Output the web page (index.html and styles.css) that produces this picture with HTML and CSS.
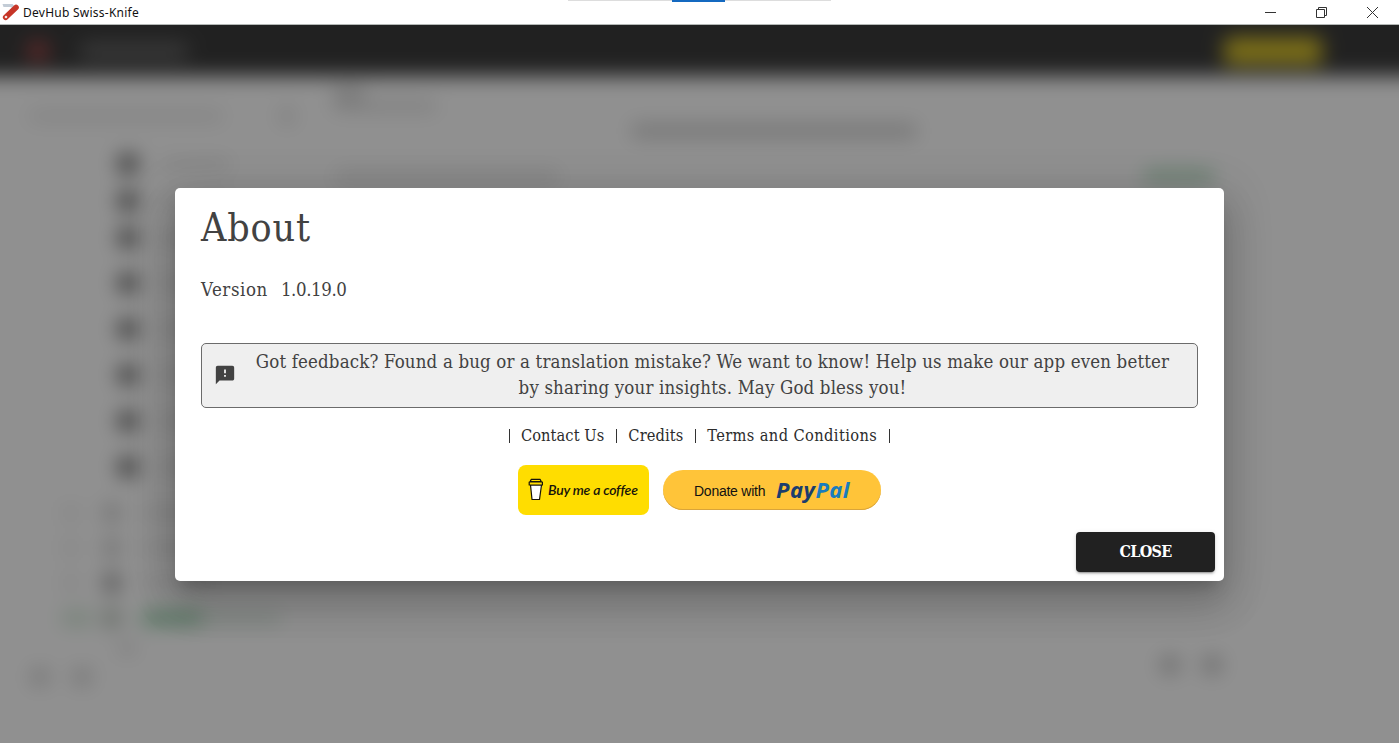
FILE: index.html
```html
<!doctype html>
<html lang="en">
<head>
 <meta charset="UTF-8">
 <meta name="viewport" content="width=device-width, initial-scale=1.0">
 <title>DevHub Swiss-Knife</title>
 <link rel="stylesheet" href="styles.css">
</head>
<body>
<div class="window">
 <div class="titlebar">
  <svg class="app-icon" width="18" height="18" viewBox="0 0 18 18">
   <path d="M.5 1h10l3 3-2 1.500-3-1.500H1.500z" fill="#c3ccd6"/>
   <path d="M3.700 14.300L14 4.500" stroke="#c63527" stroke-width="5.600" stroke-linecap="round"/>
   <circle cx="4" cy="14" r="1.300" fill="#f3e4e2"/>
  </svg>
  <span class="window-name">DevHub Swiss-Knife</span>
  <div class="window-buttons">
   <svg width="13" height="13" viewBox="0 0 13 13"><path d="M1 6.500h11"/></svg>
   <svg width="13" height="13" viewBox="0 0 13 13"><path d="M1.500 3.500h8v8h-8zM3.500 3.500v-2h8v8h-2"/></svg>
   <svg width="13" height="13" viewBox="0 0 13 13"><path d="M1 1l11 11M12 1L1 12"/></svg>
  </div>
  <div class="loader"><i></i></div>
 </div>

 <div class="app">
  <div class="page">
   <div class="appbar">
    <i class="logo"></i>
    <i class="brand"></i>
    <i class="coffee"></i>
   </div>
   <div class="columns">
    <div class="sidebar">
     <div class="search"><i></i><b></b></div>
     <ul class="menu">
      <li><i></i><b></b></li>
      <li><i></i><b></b></li>
      <li><i></i><b></b></li>
     </ul>
     <ul class="menu tall">
      <li><i></i><b></b></li>
      <li><i></i><b></b></li>
      <li><i></i><b></b></li>
      <li><i></i><b></b></li>
      <li><i></i><b></b></li>
     </ul>
     <ul class="menu sub">
      <li><u></u><i></i><b></b></li>
      <li><u></u><i></i><b></b></li>
      <li><u></u><i class="dark"></i><b></b></li>
      <li class="current"><u></u><i></i><b></b><s></s></li>
     </ul>
     <div class="more"></div>
     <div class="tools"><i></i><i></i></div>
    </div>
    <div class="content">
     <div class="crumb"></div>
     <div class="crumb long"></div>
     <div class="heading"></div>
     <div class="labels"><i></i><b></b></div>
     <div class="actions"><i></i><i></i></div>
    </div>
   </div>
  </div>

  <div class="overlay">
   <div class="dialog">
    <h4>About</h4>
    <p class="version"><span>Version</span><span class="number">1.0.19.0</span></p>
    <div class="alert">
     <svg width="22" height="22" viewBox="0 0 24 24"><path fill="#424242" d="M20 2H4c-1.100 0-1.990.9-1.990 2L2 22l4-4h14c1.100 0 2-.9 2-2V4c0-1.100-.9-2-2-2zm-7 12h-2v-2h2v2zm0-4h-2V6h2v4z"/></svg>
     <p>Got feedback? Found a bug or a translation mistake? We want to know! Help us make our app even better<br>by sharing your insights. May God bless you!</p>
    </div>
    <div class="links">
     <i></i><a>Contact Us</a><i></i><a>Credits</a><i></i><a class="terms">Terms and Conditions</a><i></i>
    </div>
    <div class="donate">
     <a class="bmc">
      <svg width="16" height="23" viewBox="0 0 16 23" stroke="#16130a" stroke-width="1.200" stroke-linejoin="round">
       <path d="M2.500 7L4 21.500h7.500L13.500 7z" fill="#fff"/>
       <path d="M3.200 1.400h9l1 2.200H2.200z" fill="#fd0"/>
       <path d="M1.200 4h13.200v3H1.200z" fill="#fd0"/>
      </svg>
      <span>Buy me a coffee</span>
     </a>
     <a class="paypal"><span class="with">Donate with</span><span class="pp"><b>Pay</b><em>Pal</em></span></a>
    </div>
    <div class="footer"><button>CLOSE</button></div>
   </div>
  </div>
 </div>
</div>
</body>
</html>
```

FILE: styles.css
```css
*{
 box-sizing: border-box;
 margin: 0;
 padding: 0;
}
html,body{
 height: 100%;
 overflow: hidden;
}
body{
 font-family: "DejaVu Serif Condensed", "DejaVu Serif", serif;
 font-stretch: condensed;
 color: #424242;
}
ul{
 list-style: none;
}
svg{
 display: block;
 flex: none;
}
.window{
 height: 100%;
 display: flex;
 flex-direction: column;
}

/* title bar */
.titlebar{
 position: relative;
 flex: none;
 height: 25px;
 display: flex;
 align-items: center;
 padding: 0 20px 0 2px;
 background: #fff;
 border-bottom: 1px solid #b4b8b6;
}
.window-name{
 margin-left: 3px;
 padding-top: 1px;
 font: 12px/24px "Noto Sans", sans-serif;
 letter-spacing: .25px;
 color: #111;
}
.window-buttons{
 margin-left: auto;
 display: flex;
 gap: 38px;
}
.window-buttons path{
 fill: none;
 stroke: #333;
}
.loader{
 position: absolute;
 left: 568px;
 top: 0;
 width: 263px;
 height: 1px;
 background: #ddd;
}
.loader i{
 display: block;
 width: 53px;
 height: 2px;
 margin-left: 104px;
 background: #1469c0;
}

/* page behind the dialog, bleeds 30px past the window so the blur has no pale rim */
.app{
 position: relative;
 flex: 1;
 min-height: 0;
 display: flex;
 flex-direction: column;
 overflow: hidden;
 background: #fff;
}
.page{
 flex: 1;
 min-height: 0;
 display: flex;
 flex-direction: column;
 margin: -30px;
 background: #fff;
 filter: blur(10px);
}
.page i,
.page b{
 border-radius: 6px;
}
.appbar{
 flex: none;
 height: 81px;
 display: flex;
 align-items: center;
 padding: 30px 107px 0 58px;
 background: #212121;
}
.logo{
 width: 20px;
 height: 18px;
 background: #a33;
}
.brand{
 width: 108px;
 height: 16px;
 margin-left: 32px;
 background: #555;
}
.coffee{
 width: 98px;
 height: 28px;
 margin-left: auto;
 background: #d5bb10;
}
.columns{
 flex: 1;
 min-height: 0;
 display: flex;
 padding: 0 30px 30px;
}
.sidebar{
 width: 320px;
 padding-top: 28px;
}
.search{
 display: flex;
 align-items: center;
 height: 24px;
 margin-bottom: 17px;
 padding-left: 28px;
}
.search i{
 width: 196px;
 height: 12px;
 margin-right: 56px;
 background: #e6e6e6;
}
.search b{
 width: 14px;
 height: 18px;
 background: #dadada;
}
.menu li{
 display: flex;
 align-items: center;
 height: 37px;
 padding-left: 118px;
}
.menu i{
 width: 20px;
 height: 20px;
 margin-right: 21px;
 background: #606060;
}
.menu b{
 width: 72px;
 height: 10px;
 background: #e4e4e4;
}
.menu.tall{
 margin-top: 4px;
}
.menu.tall li{
 height: 46px;
}
.menu.sub{
 margin-top: 5px;
}
.menu.sub li{
 height: 35px;
 padding-left: 62px;
}
.menu.sub u{
 width: 18px;
 height: 16px;
 margin-right: 24px;
 background: #ececec;
}
.menu.sub i{
 width: 16px;
 background: #c4c4c4;
}
.menu.sub .dark{
 background: #8c8c8c;
}
.menu.sub .current u{
 width: 30px;
 margin-right: 12px;
 background: #d0e6d4;
}
.menu.sub .current i{
 background: #aab8aa;
}
.menu.sub .current b{
 width: 62px;
 height: 14px;
 background: #86c89c;
}
.menu.sub s{
 width: 78px;
 height: 12px;
 background: #dae9df;
}
.more{
 width: 14px;
 height: 12px;
 margin: 7px 0 0 120px;
 background: #d5d5d5;
}
.tools{
 display: flex;
 gap: 24px;
 margin: 14px 0 0 31px;
}
.tools i,
.actions i{
 width: 18px;
 height: 18px;
 background: #ccc;
}
.content{
 flex: 1;
 display: flex;
 flex-direction: column;
 padding: 12px 178px 69px 14px;
}
.crumb{
 width: 30px;
 height: 12px;
 background: #ccc;
}
.crumb.long{
 width: 102px;
 background: #dfdfdf;
}
.heading{
 width: 284px;
 height: 14px;
 margin: 12px 0 0 298px;
 background: #cbcbcb;
}
.labels{
 display: flex;
 justify-content: space-between;
 margin: 32px 6px 0 0;
}
.labels i{
 width: 226px;
 height: 14px;
 background: #e6e6e6;
}
.labels b{
 width: 72px;
 height: 12px;
 background: #a8dab8;
}
.actions{
 display: flex;
 justify-content: flex-end;
 gap: 24px;
 margin-top: auto;
}
.actions i{
 background: #b8b8b8;
}

/* dialog */
.overlay{
 position: absolute;
 inset: 0;
 display: flex;
 align-items: center;
 justify-content: center;
 background: rgba(33,33,33,.5);
}
.dialog{
 width: 1049px;
 height: 393px;
 display: flex;
 flex-direction: column;
 padding: 17px 26px 0;
 background: #fff;
 border-radius: 5px;
 box-shadow: 0 11px 15px -7px rgba(0,0,0,.2), 0 24px 38px 3px rgba(0,0,0,.14), 0 9px 46px 8px rgba(0,0,0,.12);
}
h4{
 font-size: 39px;
 font-weight: 400;
 line-height: 46px;
 letter-spacing: .9px;
}
.version{
 display: flex;
 gap: 13px;
 margin-top: 26px;
 font-size: 18.5px;
 line-height: 26px;
 letter-spacing: .6px;
}
.version .number{
 letter-spacing: -.4px;
}
.alert{
 flex: none;
 display: flex;
 align-items: center;
 height: 65px;
 margin-top: 40px;
 padding: 0 12px;
 border: 1px solid #6b6b6b;
 border-radius: 5px;
 background: #efefef;
}
.alert p{
 flex: 1;
 margin: 0 3px 0 7px;
 font-size: 18.5px;
 line-height: 26px;
 letter-spacing: .16px;
 text-align: center;
 white-space: nowrap;
}
.links{
 display: flex;
 align-items: center;
 justify-content: center;
 height: 24px;
 margin-top: 16px;
 font-size: 16.3px;
 letter-spacing: .08px;
 color: #2c2c2c;
 white-space: nowrap;
}
.links i{
 width: 1px;
 height: 14px;
 background: #333;
}
.links a{
 margin: 0 12px 0 11px;
}
.links .terms{
 letter-spacing: .38px;
}
.donate{
 display: flex;
 align-items: center;
 justify-content: center;
 gap: 14px;
 margin-top: 17px;
}
.bmc{
 display: flex;
 align-items: center;
 width: 131px;
 height: 50px;
 padding-left: 10px;
 border-radius: 8px;
 background: #fd0;
 color: #16130a;
}
.bmc span{
 margin-left: 4px;
 font: italic 600 14px "Lato", sans-serif;
 letter-spacing: -.2px;
 white-space: nowrap;
}
.paypal{
 display: flex;
 align-items: center;
 width: 218px;
 height: 40px;
 padding-left: 31px;
 border-radius: 20px;
 background: #ffc439;
 box-shadow: inset 0 -1px 0 #d9a43a;
 color: #111;
}
.with{
 width: 82px;
 padding-top: 2px;
 font: 14px "Liberation Sans", sans-serif;
 letter-spacing: -.25px;
 white-space: nowrap;
}
.pp{
 padding-bottom: 2px;
 font: italic 700 22px/30px "Noto Sans", sans-serif;
 letter-spacing: .5px;
}
.pp b{
 font-weight: 700;
 color: #1b3d6d;
}
.pp em{
 color: #1a7cbd;
}
.footer{
 display: flex;
 justify-content: flex-end;
 margin: 17px -17px 0 0;
}
button{
 width: 139px;
 height: 40px;
 border: 0;
 border-radius: 4px;
 background: #212121;
 box-shadow: 0 3px 1px -2px rgba(0,0,0,.2), 0 2px 2px rgba(0,0,0,.14), 0 1px 5px rgba(0,0,0,.12);
 color: #fff;
 font: 600 16px "DejaVu Serif Condensed", "DejaVu Serif", serif;
 font-stretch: condensed;
 letter-spacing: -.7px;
}
```
